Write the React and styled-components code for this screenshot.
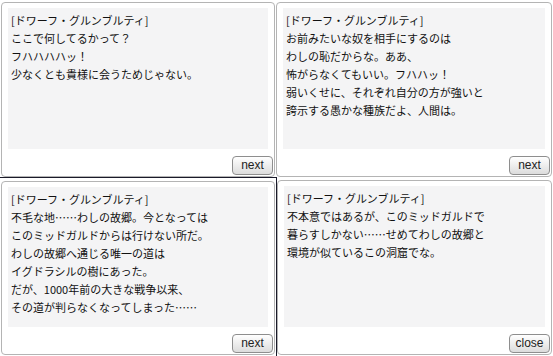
import styled, { createGlobalStyle } from "styled-components";

const GlobalStyle = createGlobalStyle`
  html, body {
    margin: 0;
    padding: 0;
    background: #fff;
  }
`;

const Board = styled.div`
  display: grid;
  grid-template-columns: 276px 277px;
  grid-template-rows: 177px 179px;
  width: 553px;
  height: 356px;
  overflow: hidden;
  background: #fff;
`;

const Cell = styled.div`
  display: flex;
  padding: ${(p) => p.$pad};
  border-top: ${(p) => (p.$lineTop ? "1px solid #1a1a2a" : "none")};
  border-left: ${(p) => (p.$lineLeft ? "1px solid #1a1a2a" : "none")};
  box-sizing: border-box;
`;

const Panel = styled.div`
  flex: 1;
  display: flex;
  flex-direction: column;
  border: 1px solid #b4b4b4;
  border-radius: 4px;
  background: #fff;
  padding: 5px 6px 1px 6px;
`;

const Content = styled.div`
  flex: 1;
  background: #f4f4f5;
  padding: 3px 3px;
  font-family: "Noto Sans CJK JP", "DejaVu Sans", sans-serif;
  font-size: 11px;
  line-height: 18px;
  color: #111;
`;

const Line = styled.div`
  white-space: nowrap;
`;

const ButtonRow = styled.div`
  display: flex;
  justify-content: flex-end;
  height: 26px;
  align-items: flex-end;
  margin-right: -5px;
`;

const Button = styled.button`
  width: 41px;
  height: 19px;
  padding: 0;
  border: 1px solid #8e8e8e;
  border-radius: 4px;
  background: linear-gradient(#ffffff, #dcdcdc);
  font-family: "Liberation Sans", Arial, sans-serif;
  font-size: 12px;
  color: #222;
  line-height: 17px;
`;

const dialogs = [
  {
    pad: "2px 1px 0 1px",
    lines: [
      "[ドワーフ・グルンブルティ]",
      "ここで何してるかって？",
      "フハハハハッ！",
      "少なくとも貴様に会うためじゃない。",
    ],
    button: "next",
  },
  {
    pad: "2px 1px 0 0",
    lines: [
      "[ドワーフ・グルンブルティ]",
      "お前みたいな奴を相手にするのは",
      "わしの恥だからな。ああ、",
      "怖がらなくてもいい。フハハッ！",
      "弱いくせに、それぞれ自分の方が強いと",
      "誇示する愚かな種族だよ、人間は。",
    ],
    button: "next",
  },
  {
    pad: "3px 1px 1px 1px",
    lineTop: true,
    lines: [
      "[ドワーフ・グルンブルティ]",
      "不毛な地……わしの故郷。今となっては",
      "このミッドガルドからは行けない所だ。",
      "わしの故郷へ通じる唯一の道は",
      "イグドラシルの樹にあった。",
      "だが、1000年前の大きな戦争以来、",
      "その道が判らなくなってしまった……",
    ],
    button: "next",
  },
  {
    pad: "3px 1px 1px 0",
    lineLeft: true,
    lines: [
      "[ドワーフ・グルンブルティ]",
      "不本意ではあるが、このミッドガルドで",
      "暮らすしかない……せめてわしの故郷と",
      "環境が似ているこの洞窟でな。",
    ],
    button: "close",
  },
];

const App = () => {
  return (
    <>
      <GlobalStyle />
      <Board>
        {dialogs.map((d, i) => (
          <Cell key={i} $pad={d.pad} $lineTop={d.lineTop} $lineLeft={d.lineLeft}>
            <Panel>
              <Content>
                {d.lines.map((line, j) => (
                  <Line key={j}>{line}</Line>
                ))}
              </Content>
              <ButtonRow>
                <Button>{d.button}</Button>
              </ButtonRow>
            </Panel>
          </Cell>
        ))}
      </Board>
    </>
  );
};

export default App;
